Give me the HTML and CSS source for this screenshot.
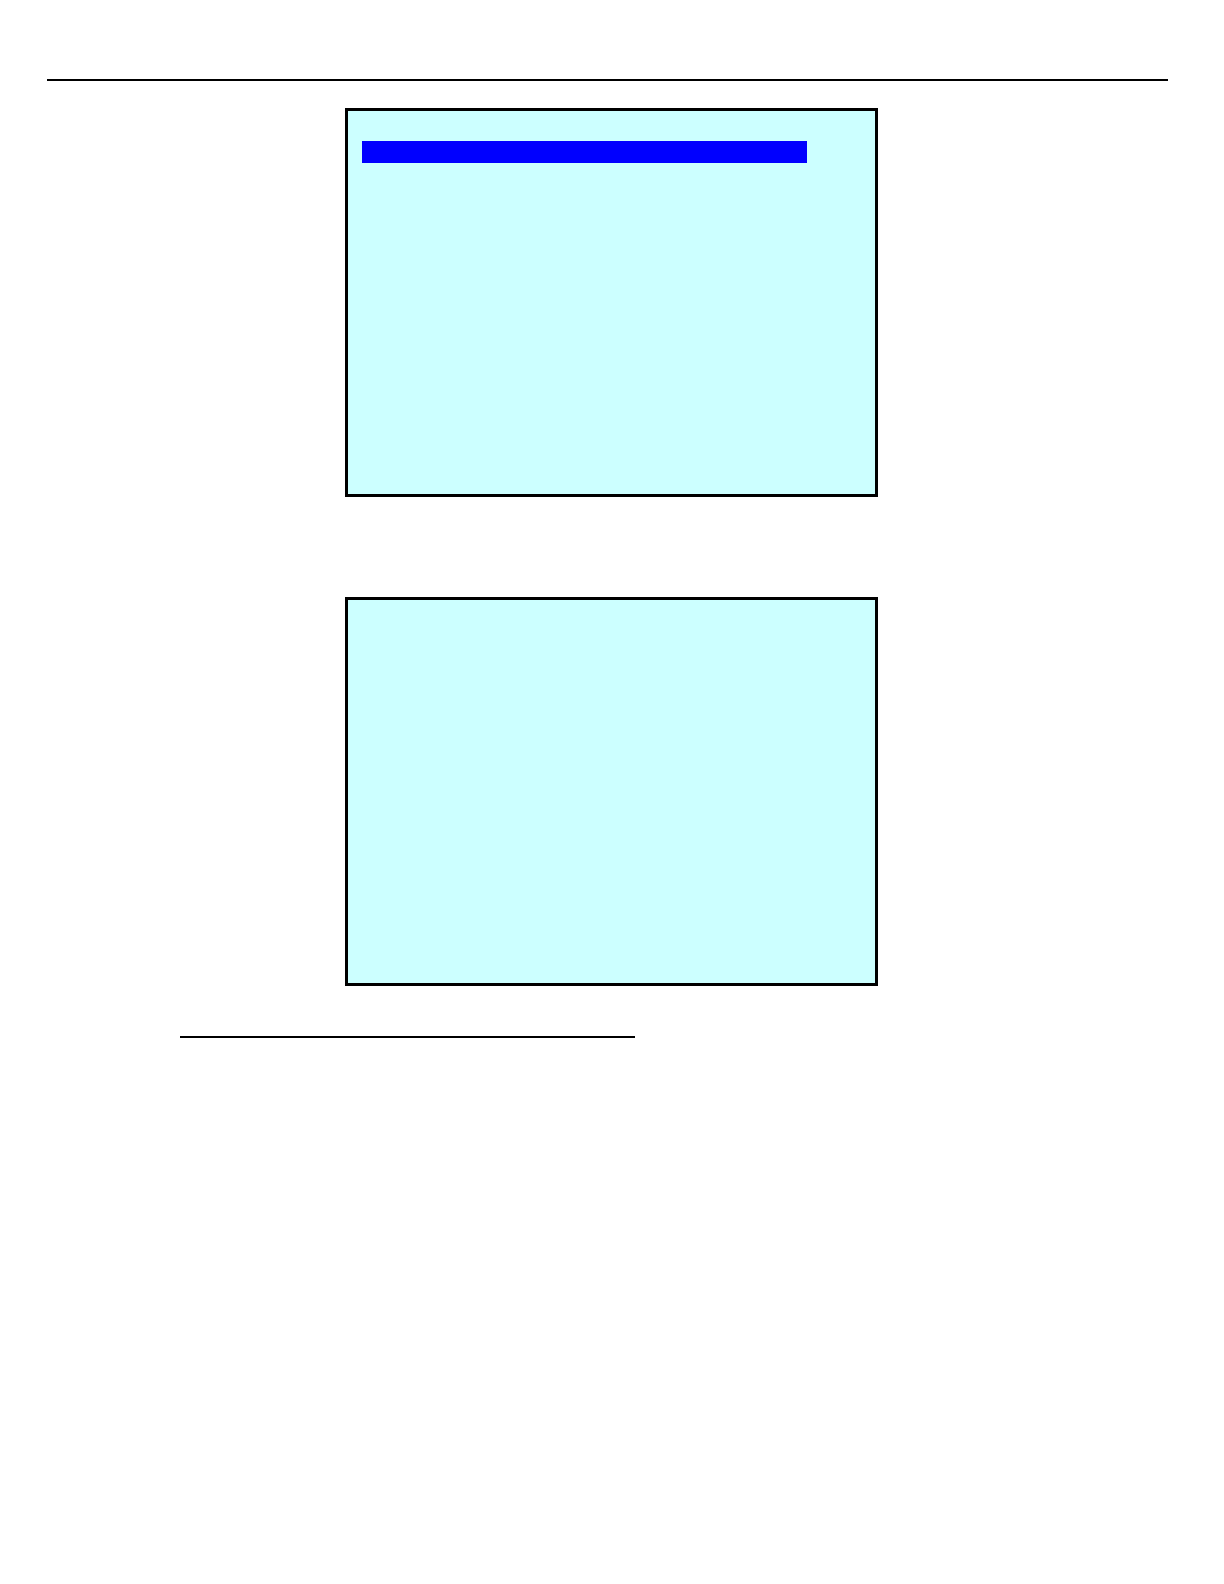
FILE: index.html
```html
<!DOCTYPE html>
<html lang="en">
<head>
    <meta charset="UTF-8">
    <meta name="viewport" content="width=device-width, initial-scale=1.0">
    <title>Display screens</title>

    <link rel="stylesheet" href="styles.css">
</head>
<body>
    <header class="header">
        <hr class="rule">
    </header>

    <main class="screens">
        <div class="screen">
            <!-- selected line -->
            <div class="highlight"></div>
        </div>
        <div class="screen"></div>
    </main>

    <section class="notes">
        <hr class="rule short">
    </section>
</body>
</html>
```

FILE: styles.css
```css
* {
    box-sizing: border-box;
}

body {
    margin: 0;
    background-color: white;
    font-family: "Liberation Sans", Arial, sans-serif;
}

.header {
    padding: 79px 56px 27px 47px;
}

.rule {
    height: 2px;
    margin: 0;
    border: none;
    background-color: black;
}

.short {
    max-width: 455px;
}

.screens {
    display: flex;
    flex-direction: column;
    align-items: center;
    gap: 100px;
    padding-right: 1px;
}

.screen {
    width: 100%;
    max-width: 533px;
    min-height: 389px;
    padding: 30px 14px;
    border: 3px solid black;
    background-color: #ccffff;
}

.highlight {
    width: 100%;
    max-width: 445px;
    height: 22px;
    background-color: #0000ff;
}

.notes {
    padding: 50px 56px 48px 180px;
}
```
